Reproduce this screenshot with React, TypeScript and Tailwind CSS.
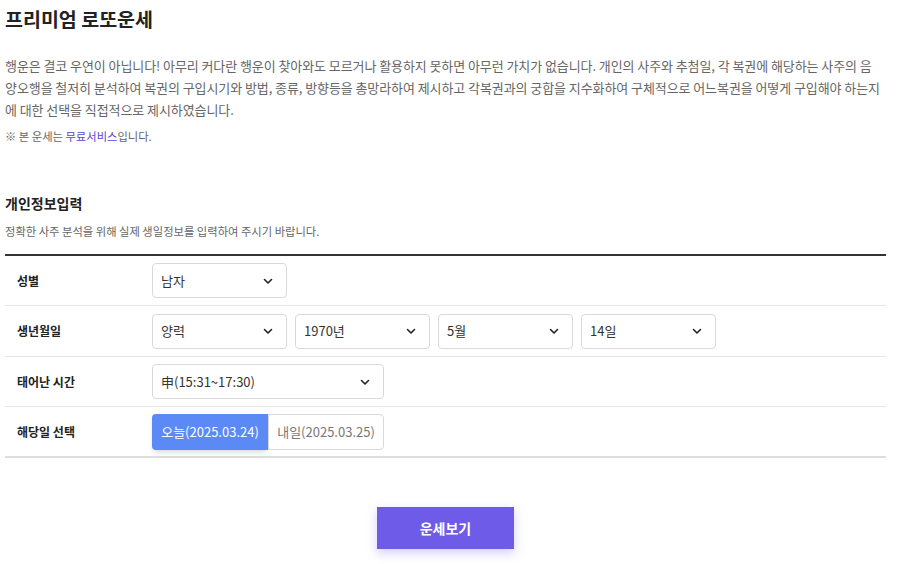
import React, { useState } from "react";

const font = { fontFamily: '"Noto Sans CJK KR", "Noto Sans", sans-serif' };

const Chevron = () => (
  <svg width="12" height="12" viewBox="0 0 12 12" fill="none" className="shrink-0">
    <path d="M2.5 4.5L6 8l3.5-3.5" stroke="#222" strokeWidth="1.6" strokeLinecap="round" strokeLinejoin="round" />
  </svg>
);

const Select = ({ value, width }: { value: string; width: string }) => (
  <div
    className={`${width} h-[35px] flex items-center justify-between pl-[8px] pr-[12px] border border-[#d9d9d9] rounded-[4px] bg-white text-[13px] text-[#333]`}
  >
    <span>{value}</span>
    <Chevron />
  </div>
);

const Row = ({
  label,
  children,
  last,
  short,
}: {
  label: string;
  children: React.ReactNode;
  last?: boolean;
  short?: boolean;
}) => (
  <div
    className={`flex items-center ${short ? "h-[50px]" : "h-[51px]"} ${
      last ? "border-b-2 border-[#dedede]" : "border-b border-[#e6e6e6]"
    }`}
  >
    <div className="w-[147px] pl-[12px] text-[12px] font-bold text-[#222]">{label}</div>
    <div className="flex items-center gap-[8px]">{children}</div>
  </div>
);

export default function App() {
  const [day, setDay] = useState(0);

  return (
    <div className="w-[900px] h-[564px] bg-white overflow-hidden" style={font}>
      <div className="w-[881px] ml-[5px]">
        <h1 className="text-[19.5px] font-bold text-[#222] pt-[6px] leading-[26px]">프리미엄 로또운세</h1>

        <p className="mt-[23px] text-[13px] leading-[22px] text-[#666] tracking-[-0.08px]">
          행운은 결코 우연이 아닙니다! 아무리 커다란 행운이 찾아와도 모르거나 활용하지 못하면 아무런 가치가 없습니다. 개인의 사주와 추첨일, 각 복권에 해당하는 사주의 음
          <br />
          양오행을 철저히 분석하여 복권의 구입시기와 방법, 종류, 방향등을 총망라하여 제시하고 각복권과의 궁합을 지수화하여 구체적으로 어느복권을 어떻게 구입해야 하는지에 대한 선택을 직접적으로 제시하였습니다.
        </p>
        <p className="mt-[7px] text-[11.3px] leading-[16px] text-[#666]">
          ※ 본 운세는 <span className="text-[#5b45d6]">무료서비스</span>입니다.
        </p>

        <h2 className="mt-[49px] text-[14px] font-bold text-[#222] leading-[20px]">개인정보입력</h2>
        <p className="mt-[11px] text-[11.3px] text-[#666] leading-[14px]">
          정확한 사주 분석을 위해 실제 생일정보를 입력하여 주시기 바랍니다.
        </p>

        <div className="mt-[16px] border-t-2 border-[#333]">
          <Row label="성별" short>
            <Select value="남자" width="w-[135px]" />
          </Row>
          <Row label="생년월일">
            <Select value="양력" width="w-[135px]" />
            <Select value="1970년" width="w-[135px]" />
            <Select value="5월" width="w-[135px]" />
            <Select value="14일" width="w-[135px]" />
          </Row>
          <Row label="태어난 시간" short>
            <Select value="申(15:31~17:30)" width="w-[232px]" />
          </Row>
          <Row label="해당일 선택" last>
            <div className="flex">
              <button
                onClick={() => setDay(0)}
                className={`w-[116px] h-[36px] text-[13px] rounded-l-[4px] ${
                  day === 0 ? "bg-[#5b8af7] text-white shadow-md" : "bg-white text-[#777] border border-[#d9d9d9]"
                }`}
              >
                오늘(2025.03.24)
              </button>
              <button
                onClick={() => setDay(1)}
                className={`w-[116px] h-[36px] text-[13px] rounded-r-[4px] ${
                  day === 1 ? "bg-[#5b8af7] text-white shadow-md" : "bg-white text-[#777] border border-[#d9d9d9]"
                }`}
              >
                내일(2025.03.25)
              </button>
            </div>
          </Row>
        </div>

        <div className="flex justify-center mt-[49px]">
          <button className="w-[137px] h-[42px] bg-[#6e5ce8] text-white text-[14px] font-bold shadow-[0_4px_10px_rgba(110,92,232,0.3)]">
            운세보기
          </button>
        </div>
      </div>
    </div>
  );
}
